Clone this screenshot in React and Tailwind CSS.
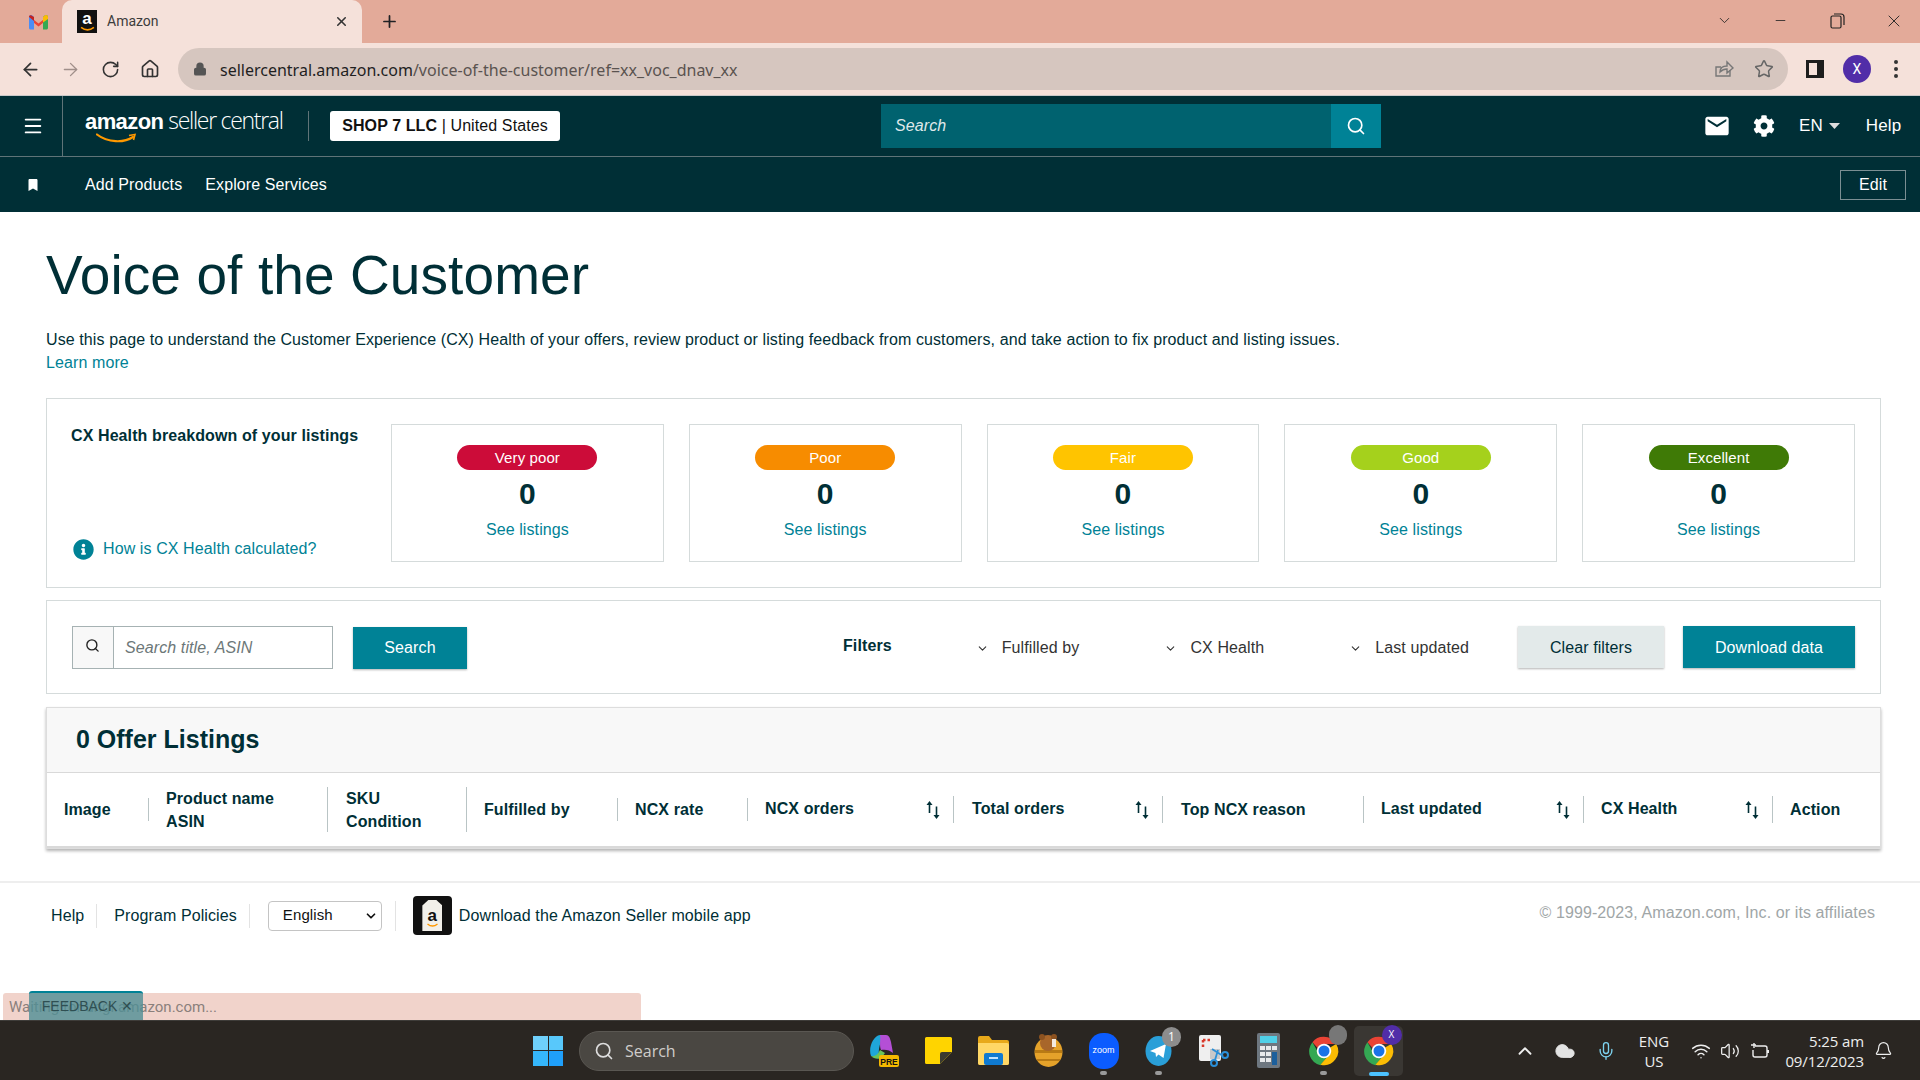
import React from 'react';
import { ArrowLeft, ArrowRight, RotateCw, Home, Lock, Star, Menu, Search, ChevronDown, ChevronUp, X, Plus, Minus, Mic, Wifi, Volume2, Bell, Cloud } from 'lucide-react';
import { FaCog, FaBookmark, FaInfoCircle } from 'react-icons/fa';
import { MdEmail } from 'react-icons/md';

const Arial = '"Liberation Sans", Arial, sans-serif';

function Gmail() {
  return (
    <svg width="19" height="16" viewBox="0 0 19 15">
      <path d="M2 3l7.500 6L17 3v3l-7.500 6L2 6z" fill="#ea4335" />
      <path d="M0 2.500C0 .5 2 0 3 .8L5 2.400V15H1.500C.7 15 0 14.300 0 13.500z" fill="#4b8df5" />
      <path d="M19 2.500C19 .5 17 0 16 .8L14 2.400V15h3.500c.8 0 1.500-.7 1.500-1.500z" fill="#34a853" />
      <path d="M14 2.400 16 .8c1-.8 3-.3 3 1.700v2L14 8z" fill="#fbbc04" />
      <path d="M5 2.400 2 .8C1 .3 0 1 0 2.500l5 4z" fill="#c5221f" />
    </svg>
  );
}

function Smile({ w = 42 }) {
  return (
    <svg width={w} height="11" viewBox="0 0 42 11">
      <path d="M1 1.500C12 10 28 10 37 4" stroke="#ff9900" strokeWidth="2.200" fill="none" strokeLinecap="round" />
      <path d="M33 2.500 39 1.500 37.500 7" stroke="#ff9900" strokeWidth="1.600" fill="none" />
    </svg>
  );
}

function ChromeLogo({ size = 30 }) {
  return (
    <svg width={size} height={size} viewBox="0 0 48 48">
      <path d="M24 4a20 20 0 0 1 17.300 10H24a10 10 0 0 0-9 5.700L7.700 11.500A20 20 0 0 1 24 4z" fill="#ea4335" />
      <path d="M7.700 11.500 16.300 27a10 10 0 0 0 11.500 6.300L19 44A20 20 0 0 1 7.700 11.500z" fill="#34a853" />
      <path d="M41.300 14A20 20 0 0 1 19 43.400L27.800 33.300A10 10 0 0 0 32.600 19z" fill="#fbbc04" />
      <circle cx="24" cy="24" r="9" fill="#1a73e8" stroke="#fff" strokeWidth="2.500" />
    </svg>
  );
}

function TabStrip() {
  return (
    <div className="h-[43px] bg-[#e3aa99] flex text-[#202124] shrink-0">
      <div className="w-[62px] flex items-center justify-center pl-[14px]"><Gmail /></div>
      <div className="w-[300px] bg-[#f5e1da] rounded-t-[10px] flex items-center pl-[15px] pr-[13px]">
        <div className="w-[20px] h-[23px] bg-[#111] flex flex-col items-center justify-center leading-none">
          <span className="text-white text-[17px] font-bold leading-[14px]" style={{ fontFamily: Arial }}>a</span>
          <svg width="15" height="5" viewBox="0 0 14 4"><path d="M1 1c4 3 8 3 12 0" stroke="#ff9900" strokeWidth="1.500" fill="none" /></svg>
        </div>
        <span className="ml-[10px] text-[14px] text-[#3c3c3c] font-['Roboto',sans-serif]">Amazon</span>
        <X size={15} strokeWidth={2.500} className="ml-auto text-[#333]" />
      </div>
      <div className="ml-[18px] flex items-center"><Plus size={19} strokeWidth={2.200} /></div>
      <div className="ml-auto flex items-center pb-[2px] text-[#222]">
        <ChevronDown size={17} strokeWidth={1.200} />
        <Minus size={15} strokeWidth={1.300} className="ml-[40px]" />
        <svg width="15" height="16" viewBox="0 0 15 16" className="ml-[42px]" fill="none" stroke="#222" strokeWidth="1.200"><rect x="1" y="3" width="10" height="12" rx="1.500" /><path d="M4 1h7a3 3 0 0 1 3 3v8" /></svg>
        <X size={20} strokeWidth={1.100} className="ml-[39px] mr-[16px]" />
      </div>
    </div>
  );
}

function Toolbar() {
  return (
    <div className="h-[53px] bg-[#f5e1da] flex items-center text-[#333] shrink-0 border-b border-[#c9c9c9]">
      <ArrowLeft size={21} strokeWidth={2} className="ml-[20px]" />
      <ArrowRight size={21} strokeWidth={1.500} className="ml-[19px] text-[#a08f8a]" />
      <RotateCw size={19} strokeWidth={2} className="ml-[20px]" />
      <Home size={20} strokeWidth={2} className="ml-[20px]" />
      <div className="ml-[18px] w-[1610px] h-[42px] bg-[#d6c6bf] rounded-full flex items-center pl-[15px] pr-[14px]">
        <Lock size={14} strokeWidth={2.500} fill="#555" className="text-[#555]" />
        <span className="ml-[13px] pt-[2px] text-[16px] text-[#1f1f1f] font-['Noto_Sans',sans-serif]">sellercentral.amazon.com<span className="text-[#5a5350]">/voice-of-the-customer/ref=xx_voc_dnav_xx</span></span>
        <svg width="20" height="20" viewBox="0 0 20 20" fill="none" stroke="#777" strokeWidth="1.400" className="ml-auto"><path d="M16 11v6H2V8h5" /><path d="M6 13c0-4 3-6 7-6V3l6 6-6 5v-4c-3 0-5 1-7 3z" /></svg>
        <Star size={20} strokeWidth={1.800} className="ml-[20px] text-[#666]" />
      </div>
      <div className="ml-[18px] w-[18px] h-[18px] bg-[#1d1d1d] flex items-center pl-[3px]"><div className="w-[8px] h-[12px] bg-[#f5e1da]" /></div>
      <div className="ml-[19px] w-[28px] h-[28px] rounded-full bg-[#512da8] flex items-center justify-center text-white text-[14px] font-['Roboto',sans-serif]">X</div>
      <div className="ml-[23px] flex flex-col gap-[3px]">
        <span className="w-[4px] h-[4px] rounded-full bg-[#333]" />
        <span className="w-[4px] h-[4px] rounded-full bg-[#333]" />
        <span className="w-[4px] h-[4px] rounded-full bg-[#333]" />
      </div>
    </div>
  );
}

function SiteHeader() {
  return (
    <div className="bg-[#002f36] text-white shrink-0 tracking-[0.1px]" style={{ fontFamily: Arial }}>
      <div className="h-[61px] flex items-center border-b border-[#5f7478]">
        <div className="w-[63px] h-full border-r border-[#5f7478] flex items-center justify-center pl-[3px]"><Menu size={22} strokeWidth={2} /></div>
        <div className="ml-[22px] w-[200px] flex flex-col">
          <div className="flex items-baseline leading-none h-[26px] whitespace-nowrap">
            <span className="text-[22px] font-bold tracking-[-0.6px]">amazon</span>
            <span className="ml-[5px] text-[23px] font-light font-['Open_Sans',sans-serif] tracking-[-1.3px]">seller central</span>
          </div>
          <div className="ml-[11px] -mt-[2px] h-[10px]"><Smile /></div>
        </div>
        <div className="ml-[23px] w-px h-[30px] bg-[#5f7478]" />
        <div className="ml-[21px] w-[230px] h-[30px] bg-white rounded-[3px] flex items-center justify-center text-[16px] text-[#111]"><b>SHOP 7 LLC</b>&nbsp;|&nbsp;United States</div>
        <div className="ml-[321px] w-[500px] h-[44px] flex">
          <div className="flex-1 bg-[#00626f] flex items-center pl-[14px] italic text-[16px] text-[#dfe8ea]">Search</div>
          <div className="w-[50px] bg-[#008296] flex items-center justify-center"><Search size={20} strokeWidth={2} /></div>
        </div>
        <MdEmail size={28} className="ml-[322px]" />
        <FaCog size={22} className="ml-[22px]" />
        <span className="ml-[24px] text-[17px]">EN</span>
        <svg width="11" height="6" viewBox="0 0 11 6" className="ml-[6px]"><path d="M0 0h11L5.500 6z" fill="#ddd" /></svg>
        <span className="ml-[26px] text-[17px]">Help</span>
      </div>
      <div className="h-[55px] flex items-center text-[16px]">
        <FaBookmark size={12} className="ml-[27px]" />
        <span className="ml-[46px]">Add Products</span>
        <span className="ml-[23px]">Explore Services</span>
        <div className="ml-auto mr-[14px] w-[66px] h-[30px] border border-[#7b8f93] flex items-center justify-center">Edit</div>
      </div>
    </div>
  );
}

const badges = [
  ['Very poor', 'bg-[#cc0c39]'],
  ['Poor', 'bg-[#f78c00]'],
  ['Fair', 'bg-[#ffc400]'],
  ['Good', 'bg-[#a5d11c]'],
  ['Excellent', 'bg-[#3f7a06]'],
];

function Breakdown() {
  return (
    <div className="mt-[24px] h-[190px] border border-[#d5dbdb] p-[25px] flex">
      <div className="w-[319px] flex flex-col justify-between pb-[2px] -ml-[1px] pt-[1px]">
        <div className="text-[16px] leading-[22px] font-bold text-[#002f36]">CX Health breakdown of your listings</div>
        <div className="flex items-center pl-[2px]">
          <FaInfoCircle size={21} className="text-[#008296]" />
          <span className="ml-[9px] text-[16px] leading-[22px] text-[#008296]">How is CX Health calculated?</span>
        </div>
      </div>
      <div className="flex-1 flex gap-[25px] ml-[1px]">
        {badges.map(([label, color]) => (
          <div key={label} className="flex-1 border border-[#d5dbdb] flex flex-col items-center pt-[20px]">
            <div className={`w-[140px] h-[25px] rounded-full ${color} text-white text-[15px] pt-[2px] flex items-center justify-center`}>{label}</div>
            <div className="mt-[6px] text-[30px] leading-[36px] font-bold text-[#002f36]">0</div>
            <div className="mt-[7px] text-[16px] leading-[22px] text-[#008296]">See listings</div>
          </div>
        ))}
      </div>
    </div>
  );
}

function Filter({ label, ml }) {
  return (
    <div className={`flex items-center pt-[2px] ${ml}`}>
      <ChevronDown size={13} strokeWidth={2} className="text-[#333]" />
      <span className="ml-[13px] text-[16px] text-[#333]">{label}</span>
    </div>
  );
}

function FilterBar() {
  return (
    <div className="mt-[12px] h-[94px] border border-[#d5dbdb] flex items-center pl-[25px] pr-[25px]">
      <div className="w-[261px] h-[43px] border border-[#a6b2b3] flex">
        <div className="w-[41px] bg-[#f8f8f8] border-r border-[#a6b2b3] flex items-center justify-center pb-[3px] pr-[1px]"><Search size={15} strokeWidth={2.200} className="text-[#222]" /></div>
        <div className="flex-1 pl-[11px] pt-[2px] flex items-center italic text-[16px] text-[#6c7778]">Search title, ASIN</div>
      </div>
      <div className="ml-[20px] mt-[2px] w-[114px] h-[42px] bg-[#008296] text-white text-[16px] flex items-center justify-center shadow-[0_1px_2px_rgba(0,0,0,0.3)]">Search</div>
      <span className="ml-[376px] font-bold text-[16px] text-[#002f36] mb-[2px]">Filters</span>
      <Filter label="Fulfilled by" ml="ml-[84px]" />
      <Filter label="CX Health" ml="ml-[85px]" />
      <Filter label="Last updated" ml="ml-[85px]" />
      <div className="ml-auto w-[146px] h-[42px] bg-[#e3eaea] text-[#002f36] text-[16px] pt-[2px] flex items-center justify-center shadow-[0_1px_2px_rgba(0,0,0,0.3)]">Clear filters</div>
      <div className="ml-[19px] w-[172px] h-[42px] bg-[#008296] text-white text-[16px] pt-[2px] flex items-center justify-center shadow-[0_1px_2px_rgba(0,0,0,0.3)]">Download data</div>
    </div>
  );
}

const SortIcon = () => (
  <svg width="14" height="18" viewBox="0 0 14 18" className="ml-auto mr-[13px]" fill="#002f36">
    <path d="M3.500 0 6.500 4H4.300V12H2.700V4H.5z" />
    <path d="M10.500 18 7.500 14H9.700V5.500H11.300V14H13.500z" />
  </svg>
);

const cols = [
  { w: 'w-[101px]', t: ['Image'], d: null, m: 'ml-[17px]' },
  { w: 'w-[179px]', t: ['Product name', 'ASIN'], d: 'h-[23px]', m: 'ml-[17px] pt-[1px]' },
  { w: 'w-[139px]', t: ['SKU', 'Condition'], d: 'h-[45px]', m: 'ml-[18px] pt-[1px]' },
  { w: 'w-[151px]', t: ['Fulfilled by'], d: 'h-[45px]', m: 'ml-[17px]' },
  { w: 'w-[130px]', t: ['NCX rate'], d: 'h-[23px]', m: 'ml-[17px]' },
  { w: 'w-[206px]', t: ['NCX orders'], d: 'h-[23px]', s: 1, m: 'ml-[17px] mb-[3px]' },
  { w: 'w-[209px]', t: ['Total orders'], d: 'h-[27px]', s: 1, m: 'ml-[18px] mb-[3px]' },
  { w: 'w-[201px]', t: ['Top NCX reason'], d: 'h-[27px]', m: 'ml-[18px]' },
  { w: 'w-[220px]', t: ['Last updated'], d: 'h-[27px]', s: 1, m: 'ml-[17px] mb-[3px]' },
  { w: 'w-[189px]', t: ['CX Health'], d: 'h-[27px]', s: 1, m: 'ml-[17px] mb-[3px]' },
  { w: 'w-[108px]', t: ['Action'], d: 'h-[27px]', m: 'ml-[17px]' },
];

function ListingTable() {
  return (
    <div className="mt-[13px] h-[142px] border border-[#dddddd] shadow-[0_2px_3px_rgba(0,0,0,0.3)]">
      <div className="h-[65px] bg-[#f8f8f8] border-b border-[#d9d9d9] flex items-center pl-[29px] text-[25px] font-bold text-[#002f36] tracking-normal">0 Offer Listings</div>
      <div className="h-[75px] flex items-center text-[16px] font-bold text-[#002f36] leading-[23px] border-b-2 border-[#d9d9d9]">
        {cols.map((c) => (
          <div key={c.t[0]} className={`${c.w} flex items-center`}>
            {c.d ? <div className={`w-px ${c.d} bg-[#b9c4c5]`} /> : null}
            <div className={c.m}>
              {c.t.map((l) => <div key={l}>{l}</div>)}
            </div>
            {c.s ? <SortIcon /> : null}
          </div>
        ))}
      </div>
    </div>
  );
}

function Footer() {
  return (
    <div className="mt-[32px] border-t-2 border-[#eeeeee] pl-[51px] pr-[45px] flex items-center pt-[13px] text-[16px] text-[#002f36] tracking-[0.1px]">
      <span>Help</span>
      <div className="ml-[12px] w-px h-[24px] bg-[#e3e3e3]" />
      <span className="ml-[17px]">Program Policies</span>
      <div className="ml-[12px] w-px h-[24px] bg-[#e3e3e3]" />
      <div className="ml-[18px] w-[114px] h-[30px] border border-[#c4c4c4] rounded-[4px] flex items-center pl-[14px] pr-[3px] text-[15px] text-[#111]">
        English
        <ChevronDown size={14} strokeWidth={3} className="ml-auto" />
      </div>
      <div className="ml-[13px] w-px h-[30px] bg-[#e3e3e3]" />
      <div className="ml-[17px] w-[39px] h-[39px] bg-[#111] rounded-[4px] flex items-center justify-center">
        <div className="w-[20px] h-[31px] bg-[#f2f0ea] flex flex-col items-center justify-center [clip-path:polygon(30%_0,70%_0,100%_18%,100%_100%,0_100%,0_18%)]">
          <span className="text-[#111] text-[17px] font-bold leading-[15px] mt-[3px]">a</span>
          <svg width="13" height="4" viewBox="0 0 12 4"><path d="M1 1c3 2.500 7 2.500 10 0" stroke="#ff9900" strokeWidth="1.400" fill="none" /></svg>
        </div>
      </div>
      <span className="ml-[7px]">Download the Amazon Seller mobile app</span>
      <span className="ml-auto text-[#a0a6a7] mb-[6px]">© 1999-2023, Amazon.com, Inc. or its affiliates</span>
    </div>
  );
}

function TaskIcon({ children, dot, active }) {
  return (
    <div className="w-[55px] h-full flex items-center justify-center relative">
      {active ? <div className="w-[49px] h-[50px] rounded-[5px] bg-[#3a3733] flex items-center justify-center">{children}</div> : children}
      {dot ? <span className="absolute bottom-[5px] w-[7px] h-[4px] rounded-full bg-[#9a9a9a]" /> : null}
      {active ? <span className="absolute bottom-[4px] w-[20px] h-[4px] rounded-full bg-[#4cc2ff]" /> : null}
    </div>
  );
}

function Taskbar() {
  return (
    <div className="h-[60px] bg-[#2a2622] border-t border-[#3e3c39] flex items-center shrink-0 text-white font-['Open_Sans',sans-serif]">
      <div className="ml-[533px] w-[30px] h-[30px] grid grid-cols-2 grid-rows-2 gap-[1px]">
        <span className="bg-[#6fd0fb]" /><span className="bg-[#58c8fb]" /><span className="bg-[#35b6fb]" /><span className="bg-[#1f9ffa]" />
      </div>
      <div className="ml-[16px] w-[275px] h-[40px] rounded-full bg-[#4a4742] border border-[#5a5752] flex items-center pl-[14px]">
        <Search size={20} strokeWidth={2} className="text-[#ddd]" />
        <span className="ml-[11px] text-[16px] text-[#cfcdca]">Search</span>
      </div>
      <div className="ml-[2px] h-full flex">
        <TaskIcon>
          <svg width="30" height="33" viewBox="0 0 30 33">
            <path d="M2 22C-1 14 4 2 11 1h6C11 5 9 16 10 23z" fill="#1fa6d9" />
            <path d="M11 1h6c3 0 4 3 5 7l2 11c-3-3-8-4-12-3-2-5 0-12-1-15z" fill="#b44fd6" />
            <path d="M2 22c3 1 7-1 9-6l5 3-3 4c-3 3-8 2-11-1z" fill="#6bc45a" />
            <rect x="10" y="21" width="20" height="12" rx="2" fill="#f5b800" />
            <text x="20" y="30.500" textAnchor="middle" fontSize="8.500" fontWeight="700" fill="#111" fontFamily="Liberation Sans">PRE</text>
          </svg>
        </TaskIcon>
        <TaskIcon>
          <svg width="27" height="27" viewBox="0 0 27 27"><path d="M0 1.500A1.500 1.500 0 0 1 1.500 0h24A1.500 1.500 0 0 1 27 1.500V15L15 27H1.500A1.500 1.500 0 0 1 0 25.500z" fill="#ffd400" /><path d="M27 15H17a2 2 0 0 0-2 2v10z" fill="#3a3a30" /></svg>
        </TaskIcon>
        <TaskIcon>
          <svg width="31" height="29" viewBox="0 0 31 29"><path d="M0 2a2 2 0 0 1 2-2h9l3 4h15a2 2 0 0 1 2 2v21a2 2 0 0 1-2 2H2a2 2 0 0 1-2-2z" fill="#e8a91a" /><path d="M0 7h29a2 2 0 0 1 2 2v18a2 2 0 0 1-2 2H2a2 2 0 0 1-2-2z" fill="#ffd766" /><rect x="6" y="17" width="19" height="12" rx="2" fill="#0f7ad1" /><rect x="11" y="21" width="9" height="2" fill="#bfe3ff" /></svg>
        </TaskIcon>
        <TaskIcon>
          <svg width="29" height="33" viewBox="0 0 29 33"><ellipse cx="14.500" cy="18" rx="14" ry="15" fill="#e5a22a" /><path d="M1 16h27v3H1zM3 25h23v2H3z" fill="#b87a14" /><circle cx="14" cy="9" r="8" fill="#a8662a" /><circle cx="8" cy="3" r="3" fill="#8c5220" /><circle cx="20" cy="3" r="3" fill="#8c5220" /><rect x="18" y="5" width="4" height="8" fill="#f4eadf" /></svg>
        </TaskIcon>
        <TaskIcon dot>
          <div className="w-[30px] h-[36px] rounded-[14px] bg-[#0b5cff] flex items-center justify-center text-[9px] text-white font-['Liberation_Sans',sans-serif]">zoom</div>
        </TaskIcon>
        <TaskIcon dot>
          <div className="relative">
            <svg width="27" height="30" viewBox="0 0 27 30"><ellipse cx="13.500" cy="15" rx="13" ry="15" fill="#2a9fd8" /><path d="M5 15 21 8 18.500 22 13.500 18.500 11 21 10.500 17z" fill="#fff" /></svg>
            <span className="absolute -top-[9px] -right-[9px] w-[19px] h-[20px] rounded-full bg-[#8d8d8d] text-[12px] text-white flex items-center justify-center">1</span>
          </div>
        </TaskIcon>
        <TaskIcon>
          <svg width="31" height="32" viewBox="0 0 31 32"><rect x="1" y="0" width="22" height="26" rx="2" fill="#efefef" /><path d="M5 5h9M5 5v9" stroke="#d93a2b" strokeWidth="2.500" strokeDasharray="2.500 2" /><rect x="12" y="14" width="10" height="10" fill="#c9c9c9" /><circle cx="16" cy="28" r="3" fill="none" stroke="#2a8fd8" strokeWidth="2" /><circle cx="27" cy="20" r="3" fill="none" stroke="#2a8fd8" strokeWidth="2" /><path d="M17 25 20 15M25 21 14 14" stroke="#2a8fd8" strokeWidth="1.800" /></svg>
        </TaskIcon>
        <TaskIcon>
          <svg width="23" height="35" viewBox="0 0 23 35"><rect width="23" height="35" rx="2" fill="#6e7780" /><rect x="3" y="3" width="17" height="7" fill="#4fd0e8" /><g fill="#e8eaec"><rect x="3" y="13" width="5" height="4" /><rect x="9" y="13" width="5" height="4" /><rect x="3" y="19" width="5" height="4" /><rect x="9" y="19" width="5" height="4" /><rect x="3" y="25" width="5" height="4" /><rect x="9" y="25" width="5" height="4" /></g><rect x="15" y="19" width="5" height="13" fill="#1c5f9c" /><rect x="15" y="13" width="5" height="4" fill="#e8eaec" /></svg>
        </TaskIcon>
        <TaskIcon dot>
          <div className="relative">
            <ChromeLogo size={34} />
            <span className="absolute -top-[9px] -right-[6px] w-[18px] h-[20px] rounded-full bg-[#777]" />
          </div>
        </TaskIcon>
        <TaskIcon active>
          <div className="relative">
            <ChromeLogo size={34} />
            <span className="absolute -top-[9px] -right-[6px] w-[20px] h-[20px] rounded-full bg-[#512da8] text-[10px] text-white flex items-center justify-center">X</span>
          </div>
        </TaskIcon>
      </div>
      <ChevronUp size={22} strokeWidth={2} className="ml-[108px] text-[#eee]" />
      <Cloud size={22} fill="#e3e3e3" strokeWidth={1} className="ml-[18px] text-[#e3e3e3]" />
      <Mic size={20} strokeWidth={1.600} className="ml-[20px] text-[#7dd3f0]" />
      <div className="ml-[20px] w-[36px] text-[15px] leading-[20px] text-center text-[#eee]"><div>ENG</div><div>US</div></div>
      <Wifi size={20} strokeWidth={1.800} className="ml-[19px] text-[#eee]" />
      <Volume2 size={20} strokeWidth={1.500} className="ml-[9px] text-[#eee]" />
      <svg width="20" height="18" viewBox="0 0 20 18" fill="none" stroke="#eee" strokeWidth="1.400" className="ml-[10px]"><path d="M5 4h10a2 2 0 0 1 2 2v7a2 2 0 0 1-2 2H5a2 2 0 0 1-2-2V8" /><path d="M18 8v3" strokeWidth="2" /><path d="M4 1v5M1 3h5" /></svg>
      <div className="ml-[8px] w-[86px] text-[15px] leading-[20px] text-right text-[#eee] tracking-[-0.1px] shrink-0"><div>5:25 am</div><div className="whitespace-nowrap">09/12/2023</div></div>
      <Bell size={19} strokeWidth={1.500} className="ml-[10px] text-[#eee]" />
    </div>
  );
}

export default function App() {
  return (
    <div className="w-[1920px] h-[1080px] overflow-hidden flex flex-col bg-white" style={{ fontFamily: Arial }}>
      <TabStrip />
      <Toolbar />
      <SiteHeader />
      <div className="flex-1 relative min-h-0">
        <div className="pl-[46px] pr-[39px] tracking-[0.1px]">
          <h1 className="mt-[33px] text-[55px] leading-[60px] text-[#002f36]">Voice of the Customer</h1>
          <div className="mt-[23px] text-[16px] leading-[23px] text-[#002f36]">Use this page to understand the Customer Experience (CX) Health of your offers, review product or listing feedback from customers, and take action to fix product and listing issues.</div>
          <div className="text-[16px] leading-[23px] text-[#008296]">Learn more</div>
          <Breakdown />
          <FilterBar />
          <ListingTable />
        </div>
        <Footer />
        <div className="absolute left-[3px] bottom-0 w-[638px] h-[27px] bg-[#f1d3cb] rounded-t-[3px] flex items-center pl-[6px] pt-[1px] text-[15px] text-[#8a7f7b] font-['Roboto',sans-serif]">Waiting for ungi.amazon.com...</div>
        <div className="absolute left-[29px] bottom-0 w-[114px] h-[29px] bg-[#4f8f95]/80 border-t-2 border-[#008296] rounded-t-[3px] flex items-center justify-center pl-[3px] text-[14px] text-[#2f4f52]">FEEDBACK ✕</div>
      </div>
      <Taskbar />
    </div>
  );
}
